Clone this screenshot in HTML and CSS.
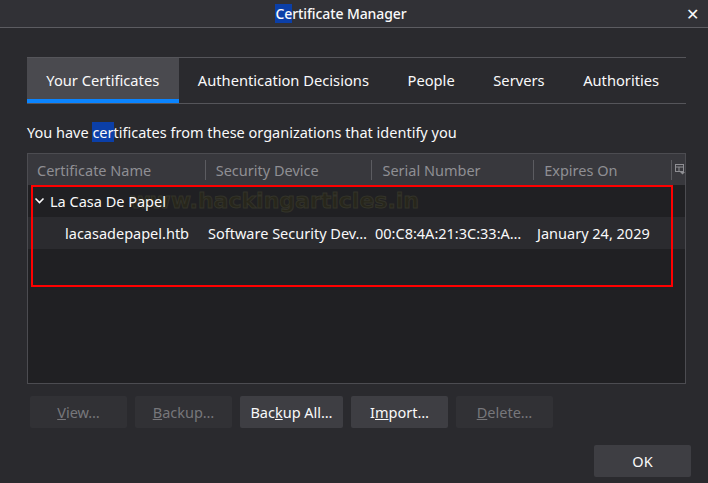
FILE: index.html
```html
<!DOCTYPE html>
<html lang="en">
<head>
    <meta charset="UTF-8">
    <meta name="viewport" content="width=device-width, initial-scale=1.0">
    <title>Certificate Manager</title>
    <link rel="stylesheet" href="styles.css">
</head>
<body>

    <!-- PENCERE BAŞLIĞI -->
    <header class="titlebar">
        <span class="title"><span class="sel">Ce</span>rtificate Manager</span>
        <span class="close">&#x2715;</span>
    </header>

    <main class="dialog">

        <!-- SEKMELER -->
        <ul class="tabs">
            <li class="tab active">Your Certificates</li>
            <li class="tab">Authentication Decisions</li>
            <li class="tab">People</li>
            <li class="tab">Servers</li>
            <li class="tab">Authorities</li>
        </ul>

        <p class="intro">You have <span class="sel">cer</span>tificates from these organizations that identify you</p>

        <!-- SERTİFİKA AĞACI -->
        <div class="tree">
            <div class="tree-head">
                <div class="col c1">Certificate Name</div>
                <div class="col c2">Security Device</div>
                <div class="col c3">Serial Number</div>
                <div class="col c4">Expires On</div>
                <div class="col picker">
                    <svg width="10" height="11" viewBox="0 0 10 11">
                        <rect x="0.5" y="0.5" width="8" height="7" fill="none" stroke="#8f8f94"/>
                        <line x1="0.5" y1="3" x2="8.5" y2="3" stroke="#8f8f94"/>
                        <line x1="4" y1="3" x2="4" y2="7.5" stroke="#8f8f94"/>
                        <path d="M5 8 L10 8 L7.5 10.5 Z" fill="#8f8f94"/>
                    </svg>
                </div>
            </div>
            <div class="tree-body">
                <!-- filigran satırların arkasında kalır -->
                <div class="watermark">www.hackingarticles.in</div>
                <div class="row org">
                    <svg class="chev" width="11" height="8" viewBox="0 0 11 8">
                        <path d="M1.5 1.5 L5.5 5.5 L9.5 1.5" fill="none" stroke="#f9f9fa" stroke-width="1.6"/>
                    </svg>
                    <span>La Casa De Papel</span>
                </div>
                <div class="row cert">
                    <div class="col c1">lacasadepapel.htb</div>
                    <div class="col c2">Software Security Dev…</div>
                    <div class="col c3">00:C8:4A:21:3C:33:A…</div>
                    <div class="col c4">January 24, 2029</div>
                </div>
                <div class="redbox"></div>
            </div>
        </div>

        <!-- BUTONLAR -->
        <div class="actions">
            <button class="btn" disabled><u>V</u>iew…</button>
            <button class="btn" disabled><u>B</u>ackup…</button>
            <button class="btn wide">Bac<u>k</u>up All…</button>
            <button class="btn">I<u>m</u>port…</button>
            <button class="btn" disabled><u>D</u>elete…</button>
        </div>

        <div class="footer">
            <button class="btn">OK</button>
        </div>
    </main>

</body>
</html>
```

FILE: styles.css
```css
/* GENEL AYARLAR */
* {
    margin: 0;
    padding: 0;
    box-sizing: border-box;
}

body {
    background-color: #2a2a2e;
    color: #f9f9fa;
    font-family: "Noto Sans", "Open Sans", sans-serif;
    font-size: 14.5px;
    width: 708px;
    height: 483px;
    overflow: hidden;
}

/* SEÇİLİ METİN (mavi vurgu) */
.sel {
    background-color: #0b3fa8;
}

/* BAŞLIK ÇUBUĞU */
.titlebar {
    height: 28px;
    background-color: #313136;
    border-bottom: 1px solid #5c5c61;
    display: flex;
    align-items: center;
    justify-content: center;
    padding-right: 26px;
    position: relative;
}

.title {
    font-size: 14px;
    letter-spacing: -0.1px;
    font-weight: 500;
}

.close {
    position: absolute;
    right: 9px;
    top: 3px;
    font-size: 16px;
}

/* İÇERİK */
.dialog {
    padding: 29px 22px 0 27px;
}

/* SEKMELER */
.tabs {
    display: flex;
    list-style: none;
    border-top: 1px solid #55555a;
    border-bottom: 1px solid #55555a;
    height: 47px;
}

.tab {
    display: flex;
    align-items: center;
    padding: 3px 19.3px 0 19.3px;
    font-size: 14.7px;
    border-bottom: 4px solid transparent;
}

.tab.active {
    background-color: #4a4a4f;
    border-bottom-color: #0a84ff;
}

/* AÇIKLAMA */
.intro {
    margin-top: 18px;
    font-size: 14.5px;
}

/* AĞAÇ */
.tree {
    margin-top: 11px;
    border: 1px solid #4c4c51;
    height: 231px;
    display: flex;
    flex-direction: column;
    background-color: #202023;
}

.tree-head {
    display: flex;
    height: 31px;
    background-color: #38383d;
    color: #8f8f94;
    align-items: center;
}

.tree-head .col {
    height: 20px;
    display: flex;
    align-items: center;
    border-left: 1px solid #5c5c61;
    padding-left: 10px;
}

.tree-head .col.c1 {
    border-left: none;
}

.col.c1 { width: 177px; padding-left: 9px; }
.col.c2 { width: 167px; }
.col.c3 { width: 162px; }
.col.c4 { width: 138px; }

.tree-head .col.picker {
    width: 14px;
    padding-left: 3px;
}

.tree-body {
    position: relative;
    flex: 1;
}

.row {
    position: relative;
    height: 32px;
    display: flex;
    align-items: center;
    white-space: nowrap;
}

.row.org {
    padding-left: 6px;
}

.chev {
    margin-right: 5px;
}

.row.cert {
    background-color: #2b2b2f;
}

.row.cert .col {
    overflow: hidden;
}

.row.cert .col.c1 { padding-left: 37px; width: 178px; }
.row.cert .col.c2 { padding-left: 2px; }
.row.cert .col.c3 { padding-left: 2px; }
.row.cert .col.c4 { padding-left: 2px; width: 150px; }

/* FİLİGRAN */
.watermark {
    position: absolute;
    left: 102px;
    top: 3px;
    font-family: "DejaVu Sans", sans-serif;
    font-weight: bold;
    font-size: 22px;
    color: #27261b;
    -webkit-text-stroke: 1px #33332a;
}

/* KIRMIZI ÇERÇEVE */
.redbox {
    position: absolute;
    left: 3px;
    top: 0;
    width: 642px;
    height: 102px;
    border: 2px solid #ff0000;
}

/* BUTONLAR */
.actions {
    display: flex;
    gap: 8px;
    margin-top: 12px;
    padding-left: 3px;
}

.btn {
    width: 97px;
    height: 32px;
    border: none;
    border-radius: 2px;
    background-color: #3e3e43;
    color: #f9f9fa;
    font-family: "Noto Sans", "Open Sans", sans-serif;
    font-size: 14.5px;
}

.btn.wide {
    width: 103px;
}

.btn:disabled {
    background-color: #313135;
    color: #77777b;
}

.footer {
    display: flex;
    justify-content: flex-end;
    margin-top: 17px;
    margin-right: -5px;
}
```
